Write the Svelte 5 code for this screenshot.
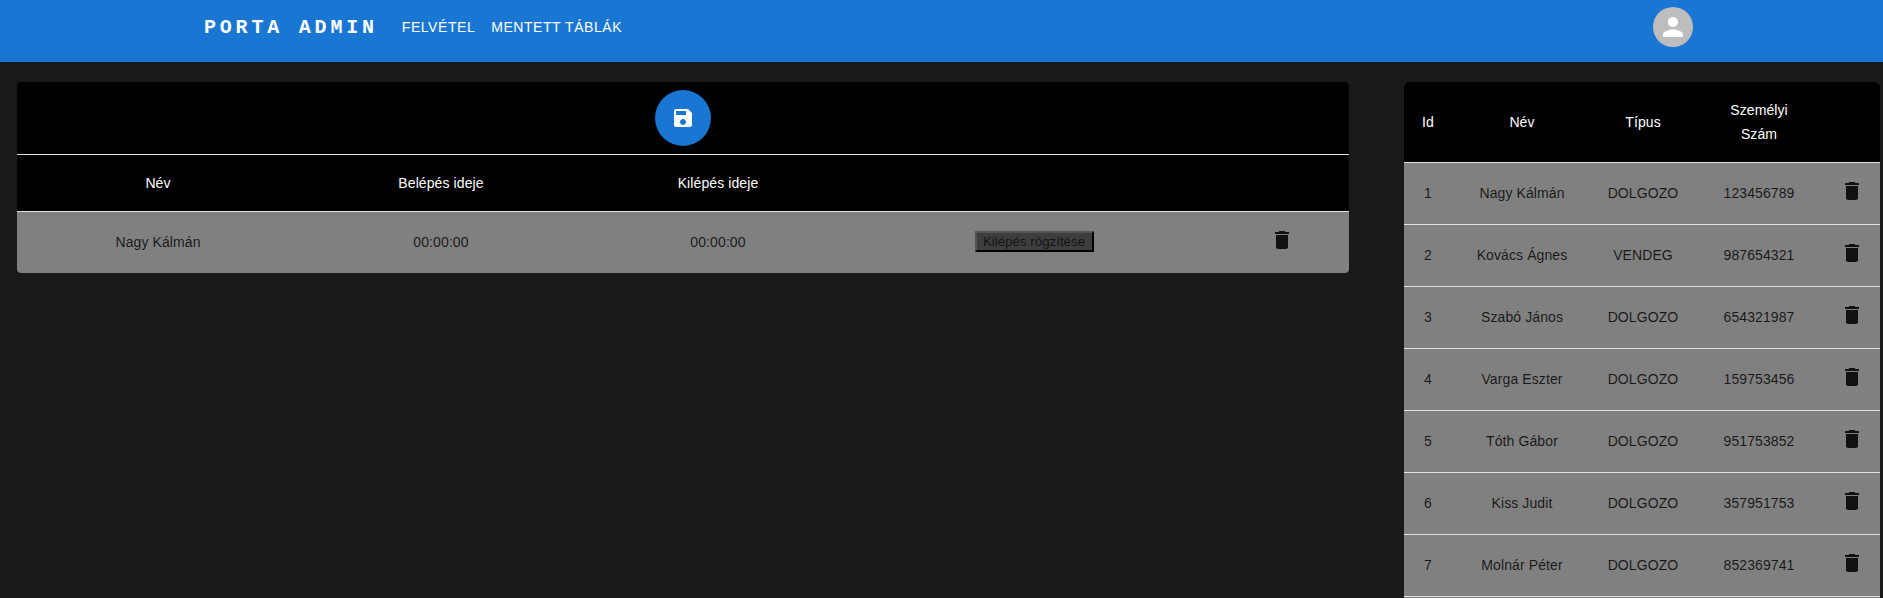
<script>
    let entries = [{ name: "Nagy Kálmán", enter: "00:00:00", leave: "00:00:00" }];

    let people = [
        { id: 1, name: "Nagy Kálmán", type: "DOLGOZO", card: "123456789" },
        { id: 2, name: "Kovács Ágnes", type: "VENDEG", card: "987654321" },
        { id: 3, name: "Szabó János", type: "DOLGOZO", card: "654321987" },
        { id: 4, name: "Varga Eszter", type: "DOLGOZO", card: "159753456" },
        { id: 5, name: "Tóth Gábor", type: "DOLGOZO", card: "951753852" },
        { id: 6, name: "Kiss Judit", type: "DOLGOZO", card: "357951753" },
        { id: 7, name: "Molnár Péter", type: "DOLGOZO", card: "852369741" }
    ];
</script>

<header class="appbar">
    <div class="brand">PORTA ADMIN</div>
    <nav>
        <a href="#felvetel">Felvétel</a>
        <a href="#tablak">Mentett táblák</a>
    </nav>
    <div class="avatar">
        <svg viewBox="0 0 24 24" width="30" height="30" aria-hidden="true">
            <path d="M12 12c2.21 0 4-1.79 4-4s-1.79-4-4-4-4 1.79-4 4 1.79 4 4 4zm0 2c-2.67 0-8 1.34-8 4v2h16v-2c0-2.66-5.33-4-8-4z"/>
        </svg>
    </div>
</header>

<main>
    <section class="card entries">
        <div class="toolbar">
            <button class="fab" aria-label="Mentés">
                <svg viewBox="0 0 24 24" width="24" height="24" aria-hidden="true">
                    <path d="M17 3H5c-1.11 0-2 .9-2 2v14c0 1.1.89 2 2 2h14c1.1 0 2-.9 2-2V7l-4-4zm-5 16c-1.66 0-3-1.34-3-3s1.34-3 3-3 3 1.34 3 3-1.34 3-3 3zm3-10H5V5h10v4z"/>
                </svg>
            </button>
        </div>
        <table>
            <thead>
                <tr>
                    <th>Név</th>
                    <th>Belépés ideje</th>
                    <th>Kilépés ideje</th>
                    <th></th>
                    <th></th>
                </tr>
            </thead>
            <tbody>
                {#each entries as entry}
                    <tr>
                        <td>{entry.name}</td>
                        <td>{entry.enter}</td>
                        <td>{entry.leave}</td>
                        <td><button class="leave">Kilépés rögzítése</button></td>
                        <td>
                            <svg class="trash" viewBox="0 0 24 24" width="24" height="24" aria-hidden="true">
                                <path d="M6 19c0 1.1.9 2 2 2h8c1.1 0 2-.9 2-2V7H6v12zM19 4h-3.5l-1-1h-5l-1 1H5v2h14V4z"/>
                            </svg>
                        </td>
                    </tr>
                {/each}
            </tbody>
        </table>
    </section>

    <section class="card people">
        <table>
            <thead>
                <tr>
                    <th>Id</th>
                    <th>Név</th>
                    <th>Típus</th>
                    <th>Személyi<br>Szám</th>
                    <th></th>
                </tr>
            </thead>
            <tbody>
                {#each people as person}
                    <tr>
                        <td>{person.id}</td>
                        <td>{person.name}</td>
                        <td>{person.type}</td>
                        <td>{person.card}</td>
                        <td>
                            <svg class="trash" viewBox="0 0 24 24" width="24" height="24" aria-hidden="true">
                                <path d="M6 19c0 1.1.9 2 2 2h8c1.1 0 2-.9 2-2V7H6v12zM19 4h-3.5l-1-1h-5l-1 1H5v2h14V4z"/>
                            </svg>
                        </td>
                    </tr>
                {/each}
            </tbody>
        </table>
    </section>
</main>

<style>
    :global(html), :global(body){
        margin: 0;
        height: 100%;
        overflow: hidden;
        background-color: #18191b;
    }
    .appbar{
        display: flex;
        align-items: center;
        height: 54px;
        padding: 0 190px 8px 204px;
        background-color: #1976d2;
        color: white;
        font-family: "Liberation Sans", Arial, sans-serif;
    }
    .brand{
        font-family: "Liberation Mono", monospace;
        font-weight: 700;
        font-size: 20px;
        letter-spacing: 3.8px;
        margin-right: 16px;
    }
    nav{
        display: flex;
        flex: 1;
    }
    nav a{
        padding: 0 8px;
        color: white;
        font-size: 14px;
        letter-spacing: 0.55px;
        text-decoration: none;
        text-transform: uppercase;
    }
    .avatar{
        display: flex;
        align-items: center;
        justify-content: center;
        width: 40px;
        height: 40px;
        border-radius: 50%;
        background-color: #bdbdbd;
    }
    .avatar svg{
        fill: white;
    }

    main{
        display: flex;
        justify-content: space-between;
        align-items: flex-start;
        padding: 20px 3px 0 17px;
        font-family: "Liberation Sans", Arial, sans-serif;
        font-size: 14px;
    }
    .card{
        overflow: hidden;
        border-radius: 4px;
        background-color: black;
    }
    .entries{
        width: 1332px;
    }
    .people{
        width: 476px;
        padding-bottom: 40px;
        background-color: #808080;
    }
    .toolbar{
        display: flex;
        justify-content: center;
        align-items: center;
        height: 72px;
        border-bottom: 1px solid #e0e0e0;
    }
    .fab{
        display: flex;
        align-items: center;
        justify-content: center;
        width: 56px;
        height: 56px;
        padding: 0;
        border: none;
        border-radius: 50%;
        background-color: #1976d2;
    }
    .fab svg{
        fill: white;
    }

    table{
        width: 100%;
        table-layout: fixed;
        border-collapse: separate;
        border-spacing: 0;
    }
    th{
        padding: 16px 0;
        line-height: 24px;
        font-weight: 400;
        letter-spacing: 0.1px;
        color: white;
        background-color: black;
        border-bottom: 1px solid #e0e0e0;
    }
    td{
        height: 61px;
        padding: 0 0 2px;
        box-sizing: border-box;
        text-align: center;
        letter-spacing: 0.1px;
        color: rgba(0, 0, 0, 0.82);
        background-color: #808080;
    }
    .people td{
        height: 62px;
        border-bottom: 1px solid #e0e0e0;
    }
    .trash{
        display: block;
        margin: -3px auto 0;
        fill: rgba(0, 0, 0, 0.87);
    }
    .leave{
        height: 21px;
        width: 119px;
        padding: 1px 0;
        box-sizing: border-box;
        border: 2px outset black;
        background-color: #3e3e3e;
        color: #141414;
        font-family: "Liberation Sans", Arial, sans-serif;
        font-size: 13.33px;
    }

    .entries th:nth-child(1){ width: 282px; }
    .entries th:nth-child(2){ width: 284px; }
    .entries th:nth-child(3){ width: 270px; }
    .entries th:nth-child(4){ width: 362px; }

    .people th:nth-child(1){ width: 48px; }
    .people th:nth-child(2){ width: 140px; }
    .people th:nth-child(3){ width: 102px; }
    .people th:nth-child(4){ width: 130px; }
</style>
